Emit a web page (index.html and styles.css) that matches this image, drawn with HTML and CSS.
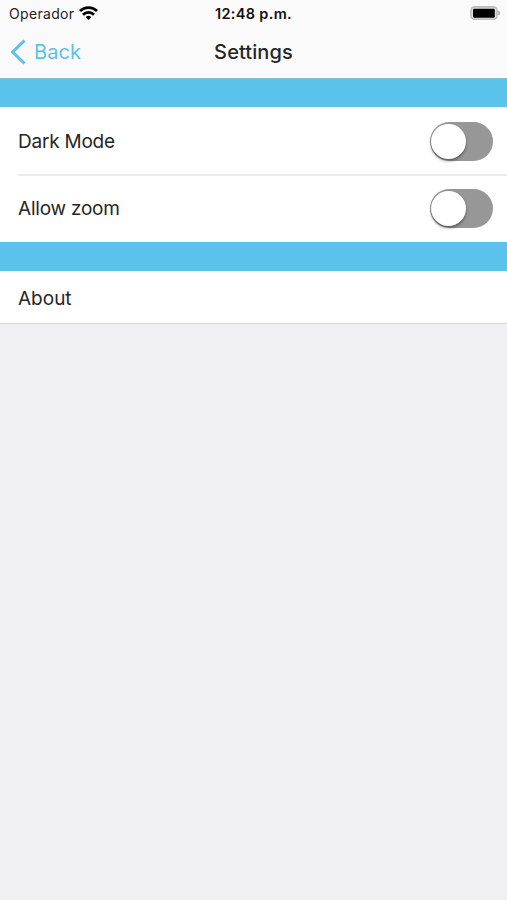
FILE: index.html
```html
<!DOCTYPE html>
<html lang="en">
<head>
<meta charset="utf-8">
<title>Settings</title>
<link rel="stylesheet" href="styles.css">
</head>
<body>
<header class="top">
  <div class="status">
    <div class="carrier"><span>Operador</span>
      <svg width="19" height="14" viewBox="0 0 19 14" fill="none" stroke="#000" stroke-width="2.8"><path d="M1 5.1a12 12 0 0 1 17 0M4 8.7a7.8 7.8 0 0 1 11 0"/><path d="M9.5 13.9L6.7 11.2a4 4 0 0 1 5.6 0z" fill="#000" stroke="none"/></svg>
    </div>
    <span class="clock">12:48 p.m.</span>
    <svg class="battery" width="31" height="14" viewBox="0 0 31 14"><rect x="1" y=".9" width="26" height="12.4" rx="3.5" fill="#e0e0e0" stroke="#bdbdbd" stroke-width="1.6"/><rect x="3" y="2.7" width="21.8" height="9" rx="1.3" fill="#000"/><path d="M28 4.4q2.3.8 2.3 2.6t-2.3 2.6z" fill="#b5b5b5"/></svg>
  </div>
  <nav class="nav">
    <a class="back"><svg width="16" height="26" viewBox="0 0 16 26" fill="none" stroke="#5ac2eb" stroke-width="3"><path d="M14.5 1.5L2.7 13 14.5 24.5"/></svg><span>Back</span></a>
    <h1 class="title">Settings</h1>
  </nav>
</header>
<main>
  <div class="band first"></div>
  <section class="list">
    <div class="row"><span>Dark Mode</span><i class="switch"></i></div>
    <div class="row second"><span>Allow zoom</span><i class="switch"></i></div>
  </section>
  <div class="band"></div>
  <section class="list about"><span>About</span></section>
</main>
</body>
</html>
```
FILE: styles.css
```css
* { box-sizing: border-box; }
body { margin: 0; min-height: 900px; background: #efeff4; color: #262626; font-family: Inter, sans-serif; font-size: 19px; letter-spacing: -.22px; }
.top { height: 79px; background: #fafafa; border-bottom: 1px solid #7fbfd9; }
.status { height: 26px; display: grid; grid-template-columns: 1fr auto 1fr; align-items: center; padding: 0 6px 0 9px; color: #222; font-size: 14px; letter-spacing: .33px; }
.carrier { display: flex; align-items: center; gap: 5px; }
.clock { padding-right: 1px; margin-left: -2px; font-weight: 600; font-size: 14.5px; letter-spacing: .32px; color: #111; }
.battery { justify-self: end; }
.nav { height: 51px; display: grid; grid-template-columns: 1fr auto 1fr; align-items: center; padding: 0 10px; }
.back { display: flex; align-items: center; gap: 8px; color: #5ac2eb; font-size: 20px; letter-spacing: .1px; }
.title { margin: 0; font-size: 20px; font-weight: 500; letter-spacing: .1px; }
.band { height: 29px; background: #5ac2eb; }
.first { height: 28px; }
.list { background: #fff; }
.row { height: 67px; margin-left: 18px; padding: 2px 14.5px 0 0; display: flex; align-items: center; justify-content: space-between; }
.second { height: 68px; padding-top: 0; padding-bottom: 1px; border-top: 2px solid #ebebeb; }
.switch { width: 63px; height: 39px; border-radius: 20px; background: #979797; padding: 2px 1.5px; }
.switch::before { content: ""; display: block; width: 35px; height: 35px; border-radius: 50%; background: #fff; box-shadow: 0 2px 3px #0006; }
.about { height: 53px; padding: 2px 0 0 18px; display: flex; align-items: center; border-bottom: 1px solid #d8d8da; letter-spacing: 0; }
```
